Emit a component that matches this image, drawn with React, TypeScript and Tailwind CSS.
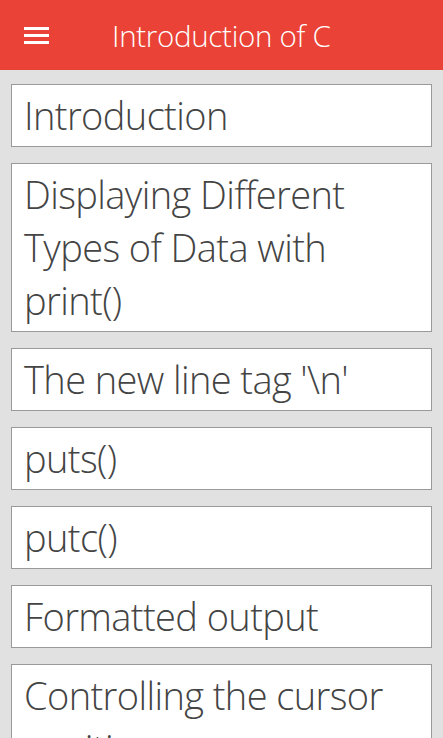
const items = [
  'Introduction',
  'Displaying Different Types of Data with print()',
  "The new line tag '\\n'",
  'puts()',
  'putc()',
  'Formatted output',
  'Controlling the cursor position',
]

export default function App() {
  return (
    <div
      className="h-[738px] w-[443px] overflow-hidden bg-[#e1e1e1]"
      style={{ fontFamily: '"Open Sans", "Noto Sans", sans-serif' }}
    >
      <header className="flex h-[70px] items-center bg-[#ea4236] text-white">
        <div className="ml-[24px] flex w-[25px] flex-col gap-[4px]">
          <span className="h-[3px] bg-white" />
          <span className="h-[3px] bg-white" />
          <span className="h-[3px] bg-white" />
        </div>
        <h1 className="ml-[63px] pt-[2px] text-[29.5px] font-light leading-none tracking-[-0.3px]">Introduction of C</h1>
      </header>
      <main className="flex flex-col gap-[16px] px-[11px] pt-[14px]">
        {items.map((t) => (
          <div
            key={t}
            className="border border-[#9a9a9a] bg-white py-[4px] pl-[12px] pr-[8px] text-[38px] font-light leading-[53px] tracking-[-0.6px] text-[#444]"
          >
            {t}
          </div>
        ))}
      </main>
    </div>
  )
}
